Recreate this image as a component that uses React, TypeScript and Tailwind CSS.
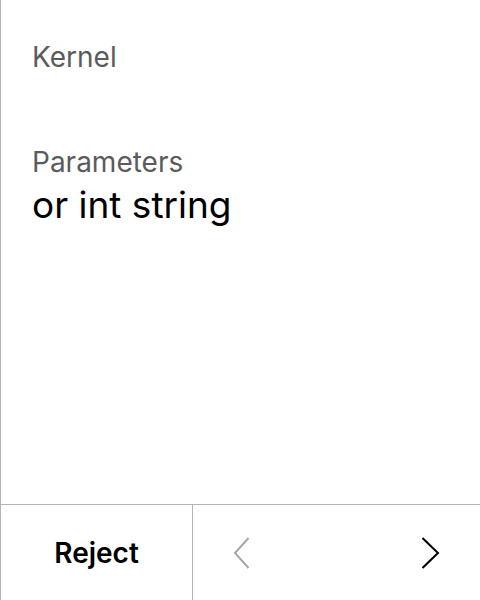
const font = { fontFamily: "Inter, 'Noto Sans', sans-serif" };

const ChevronLeft = ({ className }: { className?: string }) => (
  <svg width="18" height="34" viewBox="0 0 18 34" fill="none" className={className}>
    <path d="M15.5 2 L2 17 L15.5 32" stroke="currentColor" strokeWidth="2" />
  </svg>
);

const ChevronRight = ({ className }: { className?: string }) => (
  <svg width="18" height="34" viewBox="0 0 18 34" fill="none" className={className}>
    <path d="M0.5 2 L16 17 L0.5 32" stroke="currentColor" strokeWidth="2" />
  </svg>
);

export default function App() {
  return (
    <div
      className="flex h-[600px] w-[480px] flex-col border-l border-[#b4b4b4] bg-white"
      style={font}
    >
      <div className="flex-1 pl-[31px] pr-8 pt-[39px]">
        <div className="text-[28px] leading-[36px] text-[#5b5b5b]">Kernel</div>
        <div className="mt-[69px] text-[28px] leading-[36px] text-[#5b5b5b]">Parameters</div>
        <div className="text-[37px] leading-[49px] text-black">or int string</div>
      </div>
      <div className="flex h-[96px] border-t border-[#b4b4b4]">
        <button className="flex w-[192px] items-center justify-center border-r border-[#b4b4b4] text-[28px] font-semibold text-black">
          Reject
        </button>
        <div className="flex flex-1 items-center justify-between pl-[40px] pr-[40px]">
          <button className="text-[#a8a8a8]">
            <ChevronLeft />
          </button>
          <button className="text-black">
            <ChevronRight />
          </button>
        </div>
      </div>
    </div>
  );
}
